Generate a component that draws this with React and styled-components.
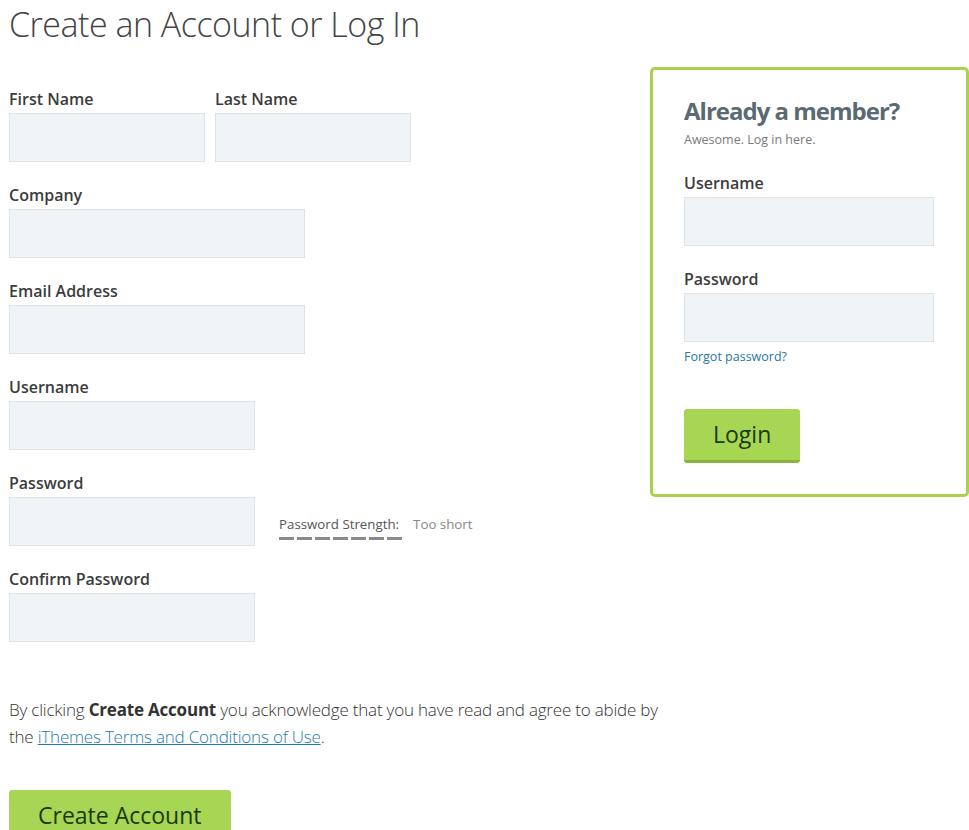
import React from "react";
import styled, { createGlobalStyle } from "styled-components";

const Global = createGlobalStyle`
  html, body { margin: 0; padding: 0; background: #fff; }
  body { font-family: "Open Sans", "Liberation Sans", sans-serif; color: #3b3b3b; }
  * { box-sizing: border-box; }
`;

const Page = styled.div`
  display: flex;
  align-items: flex-start;
  padding: 0 0 0 9px;
  width: 969px;
`;

const Main = styled.div`
  flex: 1;
  min-width: 0;
`;

const Title = styled.h1`
  margin: 0 0 40px;
  font-size: 34px;
  line-height: 48px;
  font-weight: 300;
  letter-spacing: -0.5px;
  color: #444;
`;

const Field = styled.div`
  display: flex;
  flex-direction: column;
  margin-bottom: 22px;
  width: ${(p) => p.$w}px;
`;

const Row = styled.div`
  display: flex;
  align-items: flex-start;
  gap: ${(p) => p.$gap || 10}px;
`;

const Label = styled.label`
  font-size: 16px;
  line-height: 22px;
  font-weight: 600;
  color: #3c3c3c;
  margin-bottom: 3px;
`;

const Input = styled.input`
  height: 49px;
  width: 100%;
  background: #f1f4f7;
  border: 1px solid #dde4e9;
  border-radius: 0;
  padding: 0 10px;
  font: inherit;
  outline: none;
`;

const Meter = styled.div`
  display: flex;
  flex-direction: column;
  margin-top: 43px;
`;

const MeterText = styled.div`
  font-size: 13.3px;
  line-height: 18px;
  color: #555;
  display: flex;
  gap: 14px;
`;

const MeterValue = styled.span`
  color: #888;
`;

const Dashes = styled.div`
  display: flex;
  gap: 3px;
  margin-top: 4px;
`;

const Dash = styled.span`
  width: 15px;
  height: 3px;
  background: #8a8a8a;
`;

const Terms = styled.p`
  margin: 54px 0 40px;
  font-size: 17px;
  line-height: 27px;
  font-weight: 300;
  letter-spacing: -0.2px;
  color: #333;
  width: 660px;
`;

const Strong = styled.strong`
  font-weight: 700;
`;

const Link = styled.a`
  color: #1f7bae;
  text-decoration: underline;
`;

const Button = styled.button`
  display: inline-block;
  height: 54px;
  padding: 0 29px;
  background: #a7d554;
  border: 0;
  border-bottom: 3px solid #8ab43f;
  border-radius: 3px;
  color: #1a3a0b;
  font-family: "Open Sans", "Liberation Sans", sans-serif;
  font-size: 23px;
  line-height: 51px;
  font-weight: 400;
  cursor: pointer;
`;

const Aside = styled.aside`
  width: 319px;
  flex-shrink: 0;
  margin-top: 67px;
  border: 3px solid #a9d14e;
  border-radius: 5px;
  padding: 25px 32px 31px 31px;
  display: flex;
  flex-direction: column;
  align-items: flex-start;
`;

const AsideTitle = styled.h2`
  margin: 0;
  font-size: 24px;
  line-height: 32px;
  font-weight: 700;
  letter-spacing: -1px;
  color: #5a6a73;
`;

const AsideSub = styled.p`
  margin: 3px 0 22px;
  font-size: 12.5px;
  line-height: 20px;
  color: #7a7a7a;
`;

const Forgot = styled.a`
  margin-top: -17px;
  font-size: 12.5px;
  line-height: 20px;
  color: #2a77a6;
  text-decoration: none;
  margin-bottom: 42px;
`;

export default function App() {
  return (
    <>
      <Global />
      <Page>
        <Main>
          <Title>Create an Account or Log In</Title>
          <Row>
            <Field $w={196}>
              <Label>First Name</Label>
              <Input />
            </Field>
            <Field $w={196}>
              <Label>Last Name</Label>
              <Input />
            </Field>
          </Row>
          <Field $w={296}>
            <Label>Company</Label>
            <Input />
          </Field>
          <Field $w={296}>
            <Label>Email Address</Label>
            <Input />
          </Field>
          <Field $w={246}>
            <Label>Username</Label>
            <Input />
          </Field>
          <Row $gap={24}>
            <Field $w={246}>
              <Label>Password</Label>
              <Input type="password" />
            </Field>
            <Meter>
              <MeterText>
                <span>Password Strength:</span>
                <MeterValue>Too short</MeterValue>
              </MeterText>
              <Dashes>
                {Array.from({ length: 7 }).map((_, i) => (
                  <Dash key={i} />
                ))}
              </Dashes>
            </Meter>
          </Row>
          <Field $w={246}>
            <Label>Confirm Password</Label>
            <Input type="password" />
          </Field>
          <Terms>
            By clicking <Strong>Create Account</Strong> you acknowledge that you have read and agree to abide by the{" "}
            <Link href="#">iThemes Terms and Conditions of Use</Link>.
          </Terms>
          <Button>Create Account</Button>
        </Main>
        <Aside>
          <AsideTitle>Already a member?</AsideTitle>
          <AsideSub>Awesome. Log in here.</AsideSub>
          <Field $w={250}>
            <Label>Username</Label>
            <Input />
          </Field>
          <Field $w={250}>
            <Label>Password</Label>
            <Input type="password" />
          </Field>
          <Forgot href="#">Forgot password?</Forgot>
          <Button>Login</Button>
        </Aside>
      </Page>
    </>
  );
}
